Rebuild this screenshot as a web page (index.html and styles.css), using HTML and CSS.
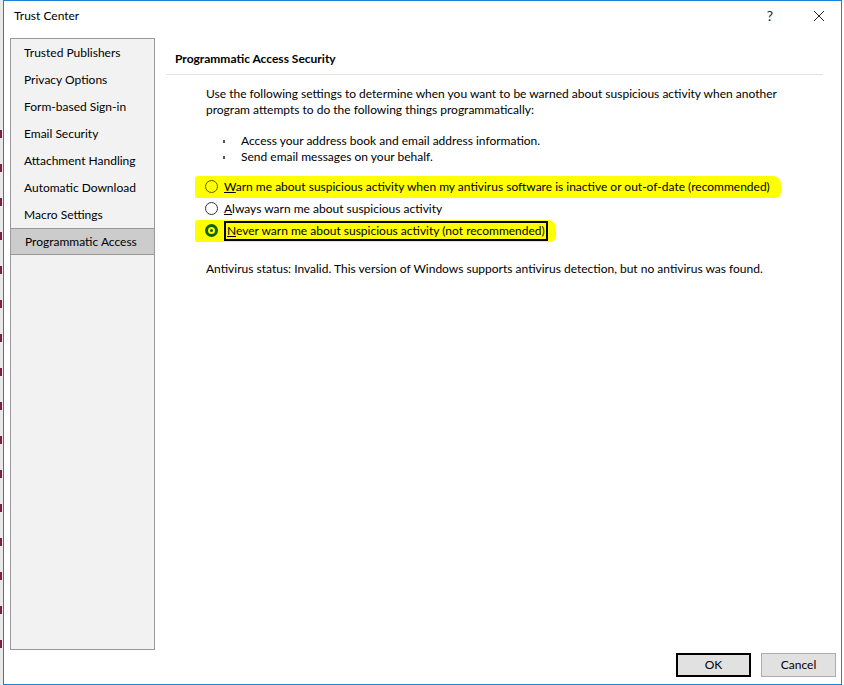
FILE: index.html
```html
<!DOCTYPE html>
<html lang="en">
<head>
  <meta charset="UTF-8">
  <title>Trust Center</title>
  <link rel="stylesheet" href="styles.css">
</head>
<body>

  <div class="desktop">
    <div class="behind">
      <span class="mark"></span>
      <span class="mark"></span>
      <span class="mark"></span>
      <span class="mark"></span>
      <span class="mark"></span>
      <span class="mark"></span>
      <span class="mark"></span>
      <span class="mark"></span>
      <span class="mark"></span>
      <span class="mark"></span>
      <span class="mark"></span>
      <span class="mark"></span>
      <span class="mark"></span>
      <span class="mark"></span>
      <span class="mark"></span>
      <span class="mark"></span>
    </div>

    <div class="dialog">
      <div class="titlebar">
        <span class="title">Trust Center</span>
        <span class="help">?</span>
        <svg class="close" width="12" height="12" viewBox="0 0 12 12">
          <path d="M1 1L11 11M11 1L1 11" stroke="#222" stroke-width="1"/>
        </svg>
      </div>

      <div class="content">
        <ul class="nav">
          <li>Trusted Publishers</li>
          <li>Privacy Options</li>
          <li>Form-based Sign-in</li>
          <li>Email Security</li>
          <li>Attachment Handling</li>
          <li>Automatic Download</li>
          <li>Macro Settings</li>
          <li class="selected">Programmatic Access</li>
        </ul>

        <div class="panel">
          <h2 class="heading">Programmatic Access Security</h2>
          <div class="body">
            <p>Use the following settings to determine when you want to be warned about suspicious activity when another program attempts to do the following things programmatically:</p>
            <ul class="bullets">
              <li>Access your address book and email address information.</li>
              <li>Send email messages on your behalf.</li>
            </ul>

            <div class="options">
              <div class="option hl hl-long">
                <span class="radio"></span>
                <span class="label"><u>W</u>arn me about suspicious activity when my antivirus software is inactive or out-of-date (recommended)</span>
              </div>
              <div class="option">
                <span class="radio"></span>
                <span class="label"><u>A</u>lways warn me about suspicious activity</span>
              </div>
              <div class="option hl hl-short">
                <span class="radio checked"></span>
                <span class="label focus"><u>N</u>ever warn me about suspicious activity (not recommended)</span>
              </div>
            </div>

            <p class="status">Antivirus status: Invalid. This version of Windows supports antivirus detection, but no antivirus was found.</p>
          </div>
        </div>
      </div>

      <div class="footer">
        <button class="default">OK</button>
        <button>Cancel</button>
      </div>
    </div>
  </div>

</body>
</html>
```

FILE: styles.css
```css
* {
  box-sizing: border-box;
}

body {
  margin: 0;
  background-color: #fff;
  font-family: 'Lato', 'Noto Sans', sans-serif;
  font-size: 12px;
  color: #000;
}

.desktop {
  display: flex;
  width: 844px;
  height: 685px;
}

.behind {
  width: 3px;
  background-color: #e9e9e9;
  display: flex;
  flex-direction: column;
  padding-top: 130px;
  gap: 26px;
}

.mark {
  height: 8px;
  width: 2px;
  background-color: #7a2046;
}

.dialog {
  width: 839px;
  height: 685px;
  border: 1px solid #1883d7;
  background-color: #fff;
  display: flex;
  flex-direction: column;
}

.titlebar {
  height: 33px;
  display: flex;
  align-items: center;
  padding: 0 0 3px 10px;
}

.title {
  flex: 1;
  font-size: 12px;
}

.help {
  font-size: 14px;
  color: #222;
  margin-right: 40px;
}

.close {
  margin-right: 16px;
}

.content {
  flex: 1;
  display: flex;
  padding: 4px 0 0 6px;
}

.nav {
  list-style: none;
  margin: 0;
  padding: 0;
  width: 145px;
  height: 612px;
  border: 1px solid #999;
  background-color: #f2f2f2;
}

.nav li {
  height: 27px;
  line-height: 28px;
  padding-left: 13px;
  white-space: nowrap;
}

.nav li.selected {
  background-color: #cccccc;
  border: 1px solid #999;
  margin-left: -1px;
  margin-right: -1px;
  padding-left: 14px;
  line-height: 26px;
}

.panel {
  flex: 1;
  padding: 0 18px 0 11px;
}

.heading {
  font-size: 12px;
  font-weight: bold;
  margin: 0;
  padding: 13px 0 8px 9px;
  border-bottom: 1px solid #e3e3e3;
}

.body {
  padding-left: 40px;
}

.body p {
  margin: 0;
  line-height: 16px;
}

.body > p:first-child {
  padding-top: 11px;
  width: 590px;
}

.bullets {
  margin: 15px 0 0;
  padding-left: 35px;
  list-style: none;
}

.bullets li {
  line-height: 16px;
  position: relative;
}

.bullets li::before {
  content: "";
  position: absolute;
  left: -18px;
  top: 7px;
  width: 2px;
  height: 3px;
  background-color: #555;
}

.options {
  margin-top: 11px;
  margin-left: -11px;
}

.option {
  display: flex;
  align-items: center;
  height: 22px;
  padding-left: 10px;
}

.option.hl {
  background-color: #ffff00;
  border-radius: 3px 8px 6px 2px;
}

.hl-long {
  width: 586px;
}

.hl-short {
  width: 361px;
}

.radio {
  width: 13px;
  height: 13px;
  border: 1px solid #333;
  border-radius: 50%;
  background-color: #fff;
  margin-right: 6px;
  flex-shrink: 0;
}

.hl .radio {
  background-color: transparent;
  border-color: #5a5a00;
}

.radio.checked {
  border: 3px solid #0f620f;
  display: flex;
  align-items: center;
  justify-content: center;
}

.radio.checked::after {
  content: "";
  width: 3px;
  height: 3px;
  border-radius: 50%;
  background-color: #0f620f;
}

.label {
  white-space: nowrap;
  line-height: 16px;
}

.label.focus {
  border: 2px solid #000;
  padding: 0 1px;
  line-height: 16px;
}

.status {
  margin-top: 19px !important;
  margin-left: 0;
}

.footer {
  height: 35px;
  display: flex;
  justify-content: flex-end;
  align-items: flex-start;
  gap: 10px;
  padding: 3px 5px 0 0;
}

button {
  font-family: inherit;
  font-size: 12px;
  width: 75px;
  height: 24px;
  background-color: #e1e1e1;
  border: 1px solid #adadad;
  color: #000;
  padding: 0;
}

button.default {
  border: 2px solid #000;
}
```
